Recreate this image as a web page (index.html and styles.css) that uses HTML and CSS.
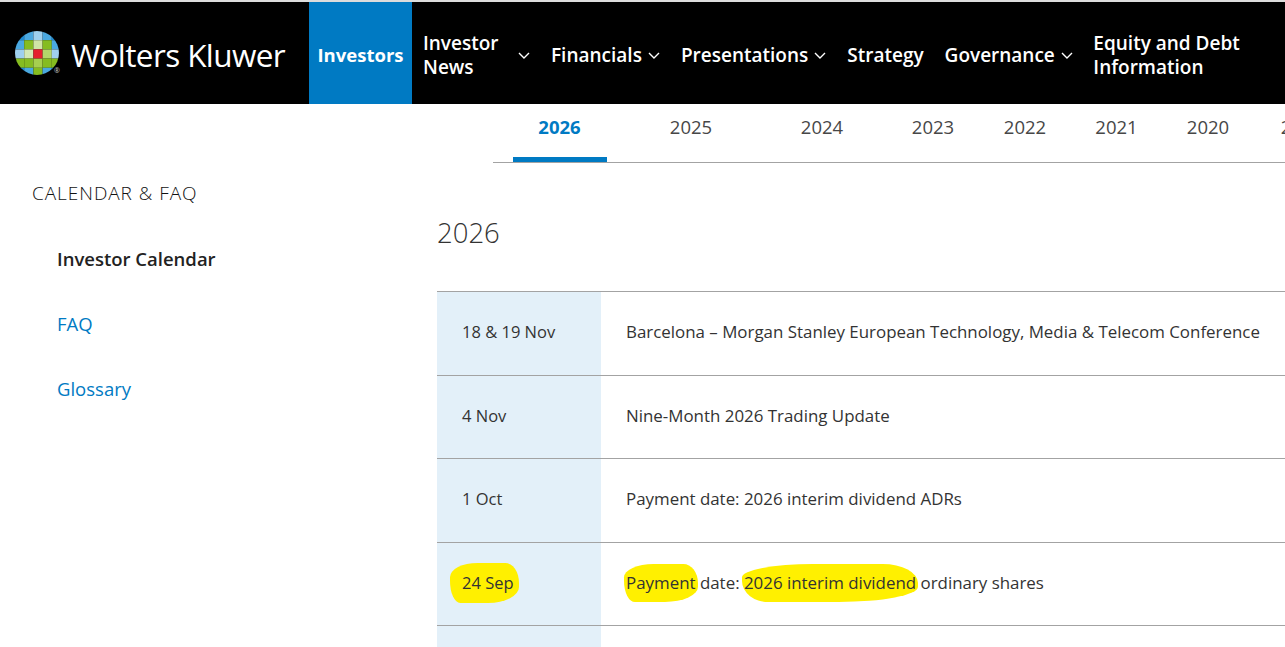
FILE: index.html
```html
<!DOCTYPE html>
<html lang="en">
<head>
<meta charset="utf-8">
<title>Investor Calendar | Wolters Kluwer</title>
<link rel="stylesheet" href="styles.css">
</head>
<body>
<div class="topstrip"></div>
<header class="header">
  <a class="brand" href="#">
    <svg class="globe" width="46" height="46" viewBox="0 0 45 45" aria-hidden="true">
      <defs><clipPath id="gc"><circle cx="21.5" cy="21.5" r="21.5"/></clipPath></defs>
      <g clip-path="url(#gc)">
        <rect x="0" y="0" width="9" height="9" fill="#1f8ad0"/>
        <rect x="9" y="0" width="9" height="9" fill="#4aa8e0"/>
        <rect x="18" y="0" width="9" height="9" fill="#9fd0ee"/>
        <rect x="27" y="0" width="9" height="9" fill="#4aa8e0"/>
        <rect x="36" y="0" width="9" height="9" fill="#1f8ad0"/>
        <rect x="0" y="9" width="9" height="9" fill="#4aa8e0"/>
        <rect x="9" y="9" width="9" height="9" fill="#85bc20"/>
        <rect x="18" y="9" width="9" height="9" fill="#cfe5a6"/>
        <rect x="27" y="9" width="9" height="9" fill="#85bc20"/>
        <rect x="36" y="9" width="9" height="9" fill="#4aa8e0"/>
        <rect x="0" y="18" width="9" height="9" fill="#9fd0ee"/>
        <rect x="9" y="18" width="9" height="9" fill="#d4e9b4"/>
        <rect x="18" y="18" width="9" height="9" fill="#e5202e"/>
        <rect x="27" y="18" width="9" height="9" fill="#b3d66a"/>
        <rect x="36" y="18" width="9" height="9" fill="#9fd0ee"/>
        <rect x="0" y="27" width="9" height="9" fill="#85bc20"/>
        <rect x="9" y="27" width="9" height="9" fill="#85bc20"/>
        <rect x="18" y="27" width="9" height="9" fill="#a6cf4f"/>
        <rect x="27" y="27" width="9" height="9" fill="#85bc20"/>
        <rect x="36" y="27" width="9" height="9" fill="#85bc20"/>
        <rect x="0" y="36" width="9" height="9" fill="#1f8ad0"/>
        <rect x="9" y="36" width="9" height="9" fill="#4aa8e0"/>
        <rect x="18" y="36" width="9" height="9" fill="#85bc20"/>
        <rect x="27" y="36" width="9" height="9" fill="#4aa8e0"/>
        <rect x="36" y="36" width="9" height="9" fill="#1f8ad0"/>
      </g>
    </svg>
    <span class="reg">®</span>
    <span class="brand-name">Wolters Kluwer</span>
  </a>
  <nav class="mainnav">
    <a class="nav-item active" href="#">Investors</a>
    <a class="nav-item has-sub news" href="#"><span class="label">Investor<br>News</span><svg class="chev" viewBox="0 0 12 7"><path d="M1 1l5 5 5-5"/></svg></a>
    <a class="nav-item has-sub" href="#"><span class="label">Financials</span><svg class="chev" viewBox="0 0 12 7"><path d="M1 1l5 5 5-5"/></svg></a>
    <a class="nav-item has-sub" href="#"><span class="label">Presentations</span><svg class="chev" viewBox="0 0 12 7"><path d="M1 1l5 5 5-5"/></svg></a>
    <a class="nav-item" href="#"><span class="label">Strategy</span></a>
    <a class="nav-item has-sub" href="#"><span class="label">Governance</span><svg class="chev" viewBox="0 0 12 7"><path d="M1 1l5 5 5-5"/></svg></a>
    <a class="nav-item last" href="#"><span class="label">Equity and Debt<br>Information</span></a>
  </nav>
</header>

<div class="tabs-row">
  <ul class="year-tabs">
    <li class="tab current">2026</li>
    <li class="tab">2025</li>
    <li class="tab">2024</li>
    <li class="tab">2023</li>
    <li class="tab">2022</li>
    <li class="tab">2021</li>
    <li class="tab">2020</li>
    <li class="tab">2019</li>
  </ul>
</div>

<div class="content">
  <aside class="sidebar">
    <h2 class="side-title">CALENDAR &amp; FAQ</h2>
    <ul class="side-links">
      <li class="side-link current">Investor Calendar</li>
      <li class="side-link">FAQ</li>
      <li class="side-link">Glossary</li>
    </ul>
  </aside>
  <main class="main">
    <h1 class="year-title">2026</h1>
    <table class="events">
      <tr><td class="date">18 &amp; 19 Nov</td><td class="desc">Barcelona – Morgan Stanley European Technology, Media &amp; Telecom Conference</td></tr>
      <tr><td class="date">4 Nov</td><td class="desc">Nine-Month 2026 Trading Update</td></tr>
      <tr><td class="date">1 Oct</td><td class="desc">Payment date: 2026 interim dividend ADRs</td></tr>
      <tr><td class="date"><span class="hl hl-a">24 Sep</span></td><td class="desc"><span class="hl hl-b">Payment</span> date: <span class="hl hl-c">2026 interim dividend</span> ordinary shares</td></tr>
      <tr><td class="date"></td><td class="desc"></td></tr>
    </table>
  </main>
</div>
</body>
</html>
```

FILE: styles.css
```css
* { box-sizing: border-box; }
html, body { margin: 0; padding: 0; }
body {
  font-family: "Open Sans", "Noto Sans", "Liberation Sans", sans-serif;
  color: #333;
  background: #fff;
  width: 1285px;
  overflow: hidden;
}
a { text-decoration: none; color: inherit; }
ul { list-style: none; margin: 0; padding: 0; }

.topstrip { height: 2px; background: #dcdcdc; }

/* header */
.header {
  display: flex;
  height: 102px;
  background: #000;
  color: #fff;
}
.brand {
  position: relative;
  display: flex;
  align-items: center;
  width: 309px;
  padding-left: 15px;
}
.globe { display: block; margin-top: 1px; }
.reg {
  position: absolute;
  left: 54px;
  top: 64px;
  font-size: 7px;
  color: #ccc;
}
.brand-name {
  margin-left: 10px;
  font-size: 31.5px;
  font-weight: 400;
  letter-spacing: -0.6px;
  margin-top: 3px;
}
.mainnav { display: flex; align-items: stretch; }
.nav-item {
  display: flex;
  align-items: center;
  padding: 3px 10.5px 0;
  font-size: 19px;
  font-weight: 600;
  line-height: 24px;
  letter-spacing: 0;
}
.nav-item.active {
  background: #007ac3;
  width: 103px;
  justify-content: center;
  padding: 3px 0 0;
  font-weight: 700;
  font-size: 18.5px;
}
.nav-item.news { padding-left: 11px; }
.nav-item.news .label { width: 89px; }
.nav-item.last { padding-left: 10px; }
.chev {
  width: 12px;
  height: 7px;
  margin-left: 6px;
  margin-top: 2px;
  fill: none;
  stroke: #fff;
  stroke-width: 1.4;
}

/* year tabs */
.tabs-row { padding-left: 493px; height: 59px; }
.year-tabs {
  display: grid;
  grid-template-columns: 133px 130px 132px 90px 94px 89px 94px 94px;
  height: 59px;
  border-bottom: 1px solid #a3a3a3;
  overflow: hidden;
}
.tab {
  position: relative;
  text-align: center;
  font-size: 18.5px;
  color: #474747;
  padding-top: 10px;
  line-height: 26px;
}
.tab.current { color: #007ac3; font-weight: 700; }
.tab.current::after {
  content: "";
  position: absolute;
  left: 50%;
  bottom: 0;
  width: 94px;
  margin-left: -47px;
  height: 5px;
  background: #007ac3;
}

/* content */
.content { display: flex; }
.sidebar { width: 437px; flex: none; padding-left: 32px; }
.side-title {
  margin: 18px 0 0;
  font-size: 19px;
  font-weight: 300;
  letter-spacing: 0.95px;
  line-height: 24px;
  color: #111;
}
.side-links { margin-top: 21px; padding-left: 25px; }
.side-link {
  height: 65px;
  display: flex;
  align-items: center;
  font-size: 18.5px;
  color: #007ac3;
}
.side-link.current { color: #222; font-weight: 600; }

.main { flex: 1; }
.year-title {
  margin: 50px 0 0;
  font-size: 27.5px;
  font-weight: 300;
  line-height: 40px;
  color: #333;
}
.events {
  margin-top: 38px;
  width: 100%;
  border-collapse: collapse;
}
.events td {
  height: 83.5px;
  border-top: 1px solid #a3a3a3;
  padding: 0 25px 3px;
  font-size: 16.9px;
  color: #333;
  vertical-align: middle;
}
.events td.date {
  width: 164px;
  background: #e3f0f9;
  font-size: 16.5px;
}
.hl {
  background: #fff000;
  padding: 7px 2px 8px;
  margin: 0 -2px;
  border-radius: 40% 20% 45% 15% / 35% 50% 40% 55%;
}
.hl-a { padding: 8px 5px 9px 12px; margin-left: -12px; }
```
